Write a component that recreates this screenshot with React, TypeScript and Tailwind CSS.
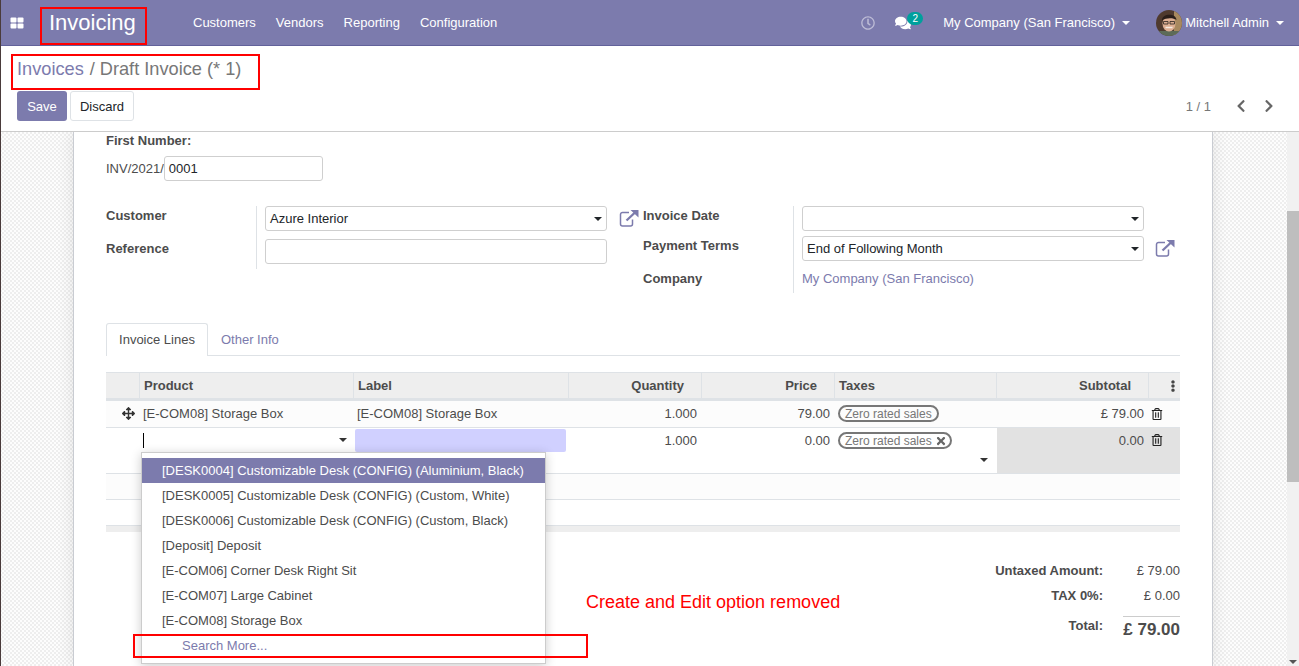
import React from "react";
import { FaArrowsAlt, FaChevronLeft, FaChevronRight, FaComments, FaEllipsisV, FaRegClock, FaRegTrashAlt, FaTimes } from "react-icons/fa";

function Caret({ className = "" }: { className?: string }) {
  return <span className={`inline-block w-0 h-0 border-x-[4px] border-x-transparent border-t-[4px] border-t-current ${className}`} />;
}

function ExtLink() {
  return (
    <svg width="20" height="18" viewBox="0 0 20 18" className="text-[#7c7bad] shrink-0" fill="none" stroke="currentColor">
      <path d="M10 3.5H3.5a2 2 0 0 0-2 2v9.500a2 2 0 0 0 2 2h8a2 2 0 0 0 2-2V10.500" strokeWidth="1.500" />
      <path d="M7.500 11.500 16 3.500" strokeWidth="2.400" />
      <path d="M11.500 1h8v7.500z" fill="currentColor" stroke="none" />
    </svg>
  );
}

function Avatar() {
  return (
    <svg width="26" height="26" viewBox="0 0 26 26" className="rounded-full shrink-0">
      <rect width="26" height="26" fill="#4f3a2e" />
      <rect x="18" width="8" height="26" fill="#a8895f" />
      <rect y="21" width="26" height="5" fill="#5d6b58" />
      <ellipse cx="13" cy="13.500" rx="6.500" ry="8" fill="#dcae92" />
      <path d="M6 10.500c-.5-7 14-8 14.500-.5-3-2.500-10.500-2.500-14.500.5z" fill="#2a1e19" />
      <path d="M7.500 11.500h4.500v2.500h-4.500zM14 11.500h4.500v2.500H14z" fill="none" stroke="#2a2320" strokeWidth=".8" />
      <path d="M9.500 17.500h7" stroke="#f7ece3" strokeWidth="1.400" />
    </svg>
  );
}

function Tag({ x }: { x?: boolean }) {
  return (
    <span className={`inline-flex items-center h-[17px] pl-[5px] rounded-full border-2 border-[#777] text-[#777] text-[12px] leading-none gap-[3px] ${x ? "pr-[3px]" : "pr-[5px]"}`}>
      Zero rated sales
      {x && <FaTimes className="text-[12px] text-[#666]" />}
    </span>
  );
}

const columns = "grid grid-cols-[34px_214px_215px_133px_133px_162px_152px_31px]";
const products = [
  "[DESK0005] Customizable Desk (CONFIG) (Custom, White)",
  "[DESK0006] Customizable Desk (CONFIG) (Custom, Black)",
  "[Deposit] Deposit",
  "[E-COM06] Corner Desk Right Sit",
  "[E-COM07] Large Cabinet",
  "[E-COM08] Storage Box",
];

function Head({ children, right }: { children?: React.ReactNode; right?: boolean }) {
  return (
    <div className={`h-[25px] border-r border-[#dee2e6] font-bold flex items-center text-[#4c4c4c] px-[4px] ${right ? "justify-end pr-[17px]" : ""}`}>
      {children}
    </div>
  );
}

export default function App() {
  return (
    <div className="relative h-[666px] w-[1299px] overflow-hidden bg-white text-[13px] text-[#4c4c4c] font-['Liberation_Sans',Arial,sans-serif]">
      <header className="h-[46px] bg-[#7c7bad] border-b border-[#62619a] flex items-center text-white">
        <svg width="14" height="12" viewBox="0 0 14 12" className="ml-[10px]" fill="white">
          <rect x="0.500" y="0.500" width="6" height="5" rx="1" />
          <rect x="7.500" y="0.500" width="6" height="5" rx="1" />
          <rect x="0.500" y="6.500" width="6" height="5" rx="1" />
          <rect x="7.500" y="6.500" width="6" height="5" rx="1" />
        </svg>
        <div className="ml-[25px] text-[22px] w-[144px]">Invoicing</div>
        <nav className="flex gap-[20px]">
          <span>Customers</span><span>Vendors</span><span>Reporting</span><span>Configuration</span>
        </nav>
        <div className="ml-auto flex items-center mr-[15px]">
          <FaRegClock className="text-[14px] text-[#bdbcd6]" />
          <div className="relative ml-[19px] mr-[28px] w-[21px]">
            <FaComments className="text-[16px] ml-[1px]" />
            <span className="absolute left-[13px] -top-[3px] h-[13px] min-w-[16px] rounded-full bg-[#00a09d] text-[10px] leading-[13px] text-center">2</span>
          </div>
          <span>My Company (San Francisco)</span>
          <Caret className="ml-[7px]" />
          <span className="ml-[26px] mr-[3px]"><Avatar /></span>
          <span>Mitchell Admin</span>
          <Caret className="ml-[7px]" />
        </div>
      </header>

      <section className="h-[86px] bg-white border-b border-[#cccccc] relative px-[17px]">
        <div className="pt-[10px] text-[18.200px] leading-[26px] text-[#777]">
          <span className="text-[#7c7bad]">Invoices</span>
          <span className="ml-[6px] mr-[5px]">/</span>
          Draft Invoice (* 1)
        </div>
        <div className="flex gap-[3px] mt-[9px]">
          <button className="h-[30px] w-[50px] pt-[1px] rounded-[3px] bg-[#7c7bad] text-white">Save</button>
          <button className="h-[30px] w-[64px] pt-[1px] rounded-[3px] bg-white border border-[#dee2e6] text-[#212529]">Discard</button>
        </div>
        <div className="absolute right-[23px] bottom-[15px] flex items-center text-[#777]">
          <span>1 / 1</span>
          <FaChevronLeft className="ml-[23px] text-[14px] text-[#666]" />
          <FaChevronRight className="ml-[14px] text-[14px] text-[#666]" />
        </div>
      </section>

      <main className="flex h-[534px]">
        <div className="flex-1 flex justify-center bg-[repeating-conic-gradient(#eeeeee_0%_25%,#fdfdfd_0%_50%)] bg-[length:4px_4px]">
          <div className="w-[1140px] mr-[1px] h-full bg-white border-x border-[#c9ccd2] px-[32px] shrink-0 shadow-[0_0_16px_rgba(0,0,0,0.1)]">
            <div className="font-bold leading-[18px]">First Number:</div>
            <div className="flex items-center mt-[6px] h-[25px]">
              <span>INV/2021/</span>
              <div className="w-[159px] h-[25px] rounded-[3px] border border-[#cfcfcf] px-[4px] leading-[23px] text-[#212529]">0001</div>
            </div>

            <div className="flex mt-[25px] h-[87px]">
              <div className="w-[537px] flex">
                <div className="w-[151px] border-r border-[#dee2e6] h-[63px] font-bold">
                  <div className="h-[20px] leading-[20px]">Customer</div>
                  <div className="mt-[13px] leading-[20px]">Reference</div>
                </div>
                <div className="ml-[8px] w-[342px]">
                  <div className="h-[25px] rounded-[3px] border border-[#cfcfcf] px-[4px] flex items-center justify-between text-[#212529]">
                    Azure Interior <Caret />
                  </div>
                  <div className="mt-[8px] h-[25px] rounded-[3px] border border-[#cfcfcf]" />
                </div>
                <div className="ml-[12px] mt-[3px]"><ExtLink /></div>
              </div>
              <div className="flex">
                <div className="w-[151px] border-r border-[#dee2e6] h-[87px] font-bold">
                  <div className="h-[20px] leading-[20px]">Invoice Date</div>
                  <div className="mt-[10px] leading-[20px]">Payment Terms</div>
                  <div className="mt-[13px] leading-[20px]">Company</div>
                </div>
                <div className="ml-[8px] w-[342px]">
                  <div className="h-[25px] rounded-[3px] border border-[#cfcfcf] px-[4px] flex items-center justify-end text-[#212529]"><Caret /></div>
                  <div className="mt-[5px] h-[25px] rounded-[3px] border border-[#cfcfcf] px-[4px] flex items-center justify-between text-[#212529]">
                    End of Following Month <Caret />
                  </div>
                  <div className="mt-[8px] leading-[20px] text-[#7c7bad]">My Company (San Francisco)</div>
                </div>
                <div className="ml-[11px] mt-[33px]"><ExtLink /></div>
              </div>
            </div>

            <div className="mt-[30px] h-[33px] border-b border-[#dee2e6] flex">
              <div className="h-[33px] w-[102px] border border-b-0 border-[#dee2e6] rounded-t-[3px] bg-white flex items-center justify-center">Invoice Lines</div>
              <div className="ml-[13px] pt-[1px] flex items-center text-[#7c7bad]">Other Info</div>
            </div>

            <div className="mt-[16px]">
              <div className={`${columns} bg-[#eeeeee] border-t border-[#dee2e6] border-b-[3px] border-b-[#dee2e6]`}>
                <Head />
                <Head>Product</Head>
                <Head>Label</Head>
                <Head right>Quantity</Head>
                <Head right>Price</Head>
                <Head>Taxes</Head>
                <Head right>Subtotal</Head>
                <div className="flex items-center justify-end pr-[1px]"><FaEllipsisV className="text-[12px] text-[#444]" /></div>
              </div>

              <div className={`${columns} h-[27px] pb-[1px] items-center bg-[#fcfcfc] border-b border-[#dee2e6]`}>
                <div className="flex justify-end pr-[5px]"><FaArrowsAlt className="text-[13px] text-[#333]" /></div>
                <div className="pl-[3px]">[E-COM08] Storage Box</div>
                <div className="pl-[3px]">[E-COM08] Storage Box</div>
                <div className="text-right pr-[5px]">1.000</div>
                <div className="text-right pr-[5px]">79.00</div>
                <div className="pl-[3px] flex"><Tag /></div>
                <div className="text-right pr-[5px]">£ 79.00</div>
                <div className="pl-[2px] text-[#222]"><FaRegTrashAlt className="text-[12px]" /></div>
              </div>

              <div className={`${columns} h-[46px] border-b border-[#dee2e6] bg-white`}>
                <div />
                <div className="flex justify-between items-start pt-[5px] pl-[3px] pr-[7px]">
                  <span className="w-[1px] h-[15px] bg-black" />
                  <Caret className="mt-[5px] text-[#333]" />
                </div>
                <div className="pl-[1px] pr-[3px] pt-[1px]"><div className="h-[23px] rounded-[2px] bg-[#d0d0ff]" /></div>
                <div className="text-right pr-[5px] pt-[3px]">1.000</div>
                <div className="text-right pr-[5px] pt-[3px]">0.00</div>
                <div className="relative pl-[3px] pt-[4px] flex items-start">
                  <Tag x />
                  <Caret className="absolute right-[9px] top-[30px] text-[#333]" />
                </div>
                <div className="bg-[#e2e2e2] text-right pr-[5px] pt-[3px]">0.00</div>
                <div className="bg-[#e2e2e2] pl-[2px] pt-[6px] text-[#222]"><FaRegTrashAlt className="text-[12px]" /></div>
              </div>

              <div className="h-[26px] bg-[#fcfcfc] border-b border-[#dee2e6]" />
              <div className="h-[26px] bg-white border-b border-[#dee2e6]" />
              <div className="h-[6px] bg-[#eeeeee]" />
            </div>

            <div className="ml-auto mt-[29px] w-[300px] text-right">
              <div className="flex justify-end h-[25px] leading-[20px]">
                <span className="font-bold">Untaxed Amount:</span><span className="w-[77px]">£ 79.00</span>
              </div>
              <div className="flex justify-end h-[30px] leading-[20px]">
                <span className="font-bold">TAX 0%:</span><span className="w-[77px]">£ 0.00</span>
              </div>
              <div className="flex justify-end">
                <span className="font-bold leading-[20px]">Total:</span>
                <span className="w-[57px] ml-[20px] border-t border-[#cccccc] font-bold text-[17px] leading-[26px] whitespace-nowrap">£ 79.00</span>
              </div>
            </div>
          </div>
        </div>
        <div className="w-[12px] bg-[#f1f1f1] relative">
          <div className="absolute top-[79px] left-0 w-full h-[271px] bg-[#bebebe]" />
          <Caret className="absolute bottom-[2px] left-[2px] text-[#555]" />
        </div>
      </main>

      <div className="absolute left-[141px] top-[452px] w-[405px] h-[212px] bg-white border border-[#cccccc] shadow-[0_2px_10px_rgba(0,0,0,0.2)] pt-[5px]">
        <div className="h-[25px] bg-[#7c7bad] text-white pl-[20px] leading-[25px]">[DESK0004] Customizable Desk (CONFIG) (Aluminium, Black)</div>
        {products.map((p) => (
          <div key={p} className="h-[25px] pl-[20px] leading-[25px]">{p}</div>
        ))}
        <div className="h-[25px] pl-[40px] leading-[25px] text-[#7c7bad]">Search More...</div>
      </div>

      <div className="absolute left-0 top-0 w-[1px] h-full bg-[#4a3b3b]" />
      <div className="absolute left-[40px] top-[7px] w-[107px] h-[38px] border-2 border-[#ff0000]" />
      <div className="absolute left-[11px] top-[54px] w-[249px] h-[36px] border-2 border-[#ff0000]" />
      <div className="absolute left-[133px] top-[634px] w-[455px] h-[24px] border-2 border-[#ff0000]" />
      <div className="absolute left-[586px] top-[591px] text-[#ff0000] text-[18px] leading-[22px] whitespace-nowrap">Create and Edit option removed</div>
    </div>
  );
}
